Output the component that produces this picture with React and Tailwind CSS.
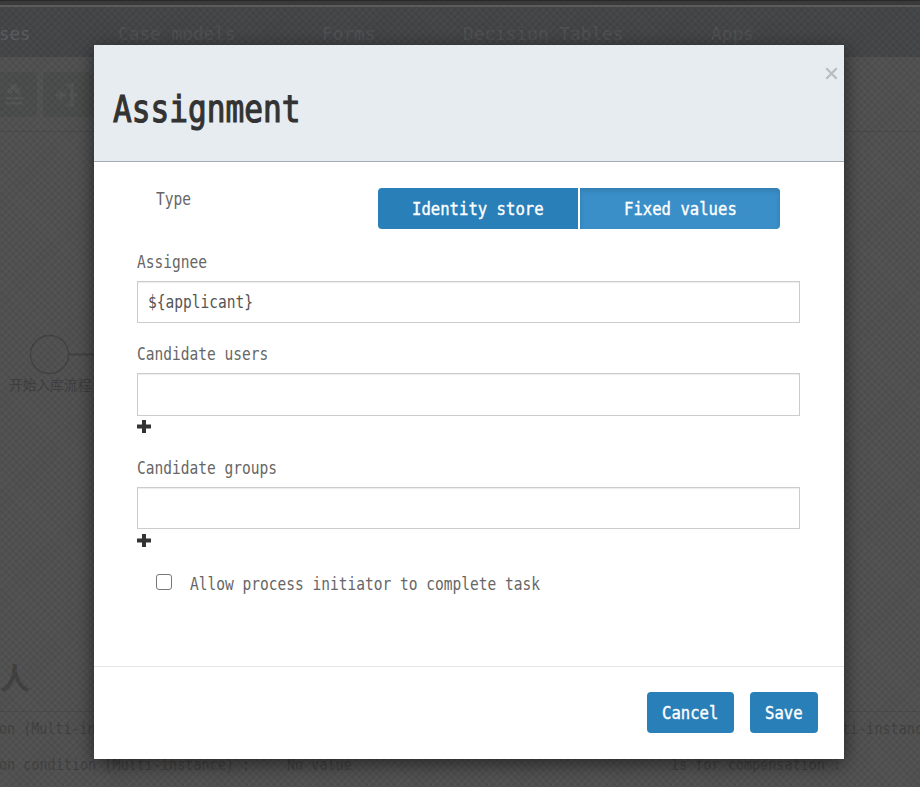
import React from "react";

function Mono({ text, advance, size, className = "" }) {
  const scale = advance / (size * 0.602);
  return (
    <span
      className={`inline-block h-6 leading-6 whitespace-nowrap ${className}`}
      style={{ width: text.length * advance }}
    >
      <span
        className="inline-block origin-left"
        style={{ fontSize: size, transform: `scaleX(${scale})` }}
      >
        {text}
      </span>
    </span>
  );
}

function Plus() {
  return (
    <svg className="block" width="14" height="13" viewBox="0 0 14 13" fill="#333">
      <path d="M5 0h4v4.500h5v4H9V13H5V8.500H0v-4h5z" />
    </svg>
  );
}

function Field({ label, value = "", tall = false }) {
  return (
    <div className="flex flex-col">
      <label className="flex h-6 text-[#666]">
        <Mono text={label} advance={8.75} size={18.5} />
      </label>
      <div
        className={`mt-[7px] flex items-center border border-[#ccc] bg-white pl-[10px] text-[#555] shadow-[inset_0_1px_1px_rgba(0,0,0,0.075)] ${tall ? "h-[43px]" : "h-[42px]"}`}
      >
        {value && <Mono text={value} advance={8.75} size={18.5} />}
      </div>
    </div>
  );
}

function Backdrop() {
  return (
    <div className="absolute inset-0 overflow-hidden bg-[#505050] text-[#404040]">
      <div className="h-[5px] border-t border-[#292929] bg-[#3a3a3a]" />
      <div className="h-[2px] bg-[#5b5b5c]" />
      <div className="h-[50px] bg-[#444547]" />
      <div className="flex h-[75px] gap-[6px] border-b border-[#484848] pt-[15px]">
        <div className="flex h-[45px] w-[37px] items-center rounded-r bg-[#494c4a]">
          <svg width="28" height="24" viewBox="0 0 28 24" fill="#525453">
            <circle cx="14" cy="4" r="3.500" />
            <circle cx="10" cy="8" r="3" />
            <circle cx="18" cy="8" r="3" />
            <path d="M5 14h18v2.500H5zM5 19h18v2.500H5z" />
          </svg>
        </div>
        <div className="flex h-[45px] w-[50px] items-center rounded bg-[#494c4a] pl-3">
          <svg width="24" height="24" viewBox="0 0 24 24" fill="none" stroke="#525453" strokeWidth="3">
            <path d="M1 12h10M6 8v9M12 2h5v20h-5M15 12h7" />
          </svg>
        </div>
      </div>
      <svg className="absolute inset-0" width="920" height="787">
        <g fill="none" stroke="#404142">
          <circle cx="49.500" cy="354.500" r="19" strokeWidth="1.300" />
          <path d="M69 354.500h26" strokeWidth="2" />
          <path d="M0 711.500h920" stroke="#494949" />
        </g>
      </svg>
      <div className="absolute top-[22px] left-[-1px]"><Mono text="ses" advance={10.5} size={18.5} className="text-[#5a5c5e]" /></div>
      <div className="absolute top-[22px] left-[118px]"><Mono text="Case models" advance={10.7} size={18.5} className="text-[#505152]" /></div>
      <div className="absolute top-[22px] left-[322px]"><Mono text="Forms" advance={10.7} size={18.5} className="text-[#505152]" /></div>
      <div className="absolute top-[22px] left-[463px]"><Mono text="Decision Tables" advance={10.7} size={18.5} className="text-[#505152]" /></div>
      <div className="absolute top-[22px] left-[711px]"><Mono text="Apps" advance={10.7} size={18.5} className="text-[#505152]" /></div>
      <div className="absolute top-[375px] left-[9px] text-[13.700px] leading-5 whitespace-nowrap text-[#3d3e3f]">开始入库流程</div>
      <div className="absolute top-[656px] left-0 text-[30px] leading-[46px] font-bold text-[#404040]">人</div>
      <div className="absolute top-[717px] left-[-1px]"><Mono text="on (Multi-instance)" advance={8.05} size={16.5} /></div>
      <div className="absolute top-[753px] left-[-1px]"><Mono text="on condition (Multi-instance) :" advance={8.1} size={16.5} /></div>
      <div className="absolute top-[753px] left-[287px]"><Mono text="No value" advance={8.1} size={16.5} /></div>
      <div className="absolute top-[753px] left-[671px]"><Mono text="Is for compensation :" advance={8.1} size={16.5} /></div>
      <div className="absolute top-[717px] left-[842px]"><Mono text="ti-instanc" advance={8.1} size={16.5} /></div>
      <div className="absolute inset-x-0 top-[7px] bottom-0 bg-[repeating-linear-gradient(45deg,rgba(0,0,0,0.05)_0_2px,transparent_2px_5px),repeating-linear-gradient(-45deg,rgba(255,255,255,0.025)_0_2px,transparent_2px_5px)]" />
    </div>
  );
}

export default function App() {
  return (
    <div className="relative h-[787px] w-[920px] overflow-hidden font-['DejaVu_Sans_Mono','Noto_Sans_CJK_SC',monospace]">
      <Backdrop />
      <div className="absolute top-[45px] left-[94px] flex h-[714px] w-[750px] flex-col bg-white shadow-[0_4px_18px_rgba(0,0,0,0.55)]">
        <header className="flex h-[117px] shrink-0 justify-between border-b border-[#a3abb5] bg-[#e7ecf0] pl-[19px]">
          <h2 className="pt-[52px] text-[#333]">
            <Mono text="Assignment" advance={18.75} size={37.5} className="[-webkit-text-stroke:1.200px_#333]" />
          </h2>
          <svg className="mt-[22px] mr-[6px]" width="13" height="13" viewBox="0 0 13 13" fill="none" stroke="#b9bdc0" strokeWidth="2.300">
            <path d="M1.300 1.300l10.400 10.400M11.700 1.300L1.300 11.700" />
          </svg>
        </header>
        <main className="flex h-[504px] shrink-0 flex-col pt-[26px] pr-[44px] pl-[43px]">
          <div className="flex h-[62px] justify-between pr-5 pl-[19px]">
            <span className="-mt-px text-[#666]"><Mono text="Type" advance={8.75} size={18.5} /></span>
            <div className="flex h-[41px] gap-[2px] text-white">
              <button className="flex w-[200px] items-center justify-center rounded-l bg-[#2980b9]">
                <Mono text="Identity store" advance={9.4} size={18.5} className="[-webkit-text-stroke:0.4px_white]" />
              </button>
              <button className="flex w-[200px] items-center justify-center rounded-r bg-[#3a8fc9] shadow-[inset_0_3px_5px_rgba(0,0,0,0.125)]">
                <Mono text="Fixed values" advance={9.4} size={18.5} className="[-webkit-text-stroke:0.4px_white]" />
              </button>
            </div>
          </div>
          <Field label="Assignee" value="${applicant}" />
          <div className="mt-[19px]"><Field label="Candidate users" tall /></div>
          <div className="mt-[4px]"><Plus /></div>
          <div className="mt-[23px]"><Field label="Candidate groups" /></div>
          <div className="mt-[5px]"><Plus /></div>
          <div className="mt-[25px] flex items-center gap-[18px] pl-[19px] text-[#666]">
            <span className="mb-[5px] h-4 w-4 rounded-[3px] border border-[#767676] bg-white" />
            <Mono text="Allow process initiator to complete task" advance={8.75} size={18.5} />
          </div>
        </main>
        <footer className="flex h-[93px] shrink-0 justify-end gap-4 border-t border-[#e5e5e5] pt-[25px] pr-[26px] text-white">
          <button className="flex h-[41px] w-[87px] items-center justify-center rounded bg-[#2980b9]">
            <Mono text="Cancel" advance={9.4} size={18.5} className="[-webkit-text-stroke:0.4px_white]" />
          </button>
          <button className="flex h-[41px] w-[68px] items-center justify-center rounded bg-[#2980b9]">
            <Mono text="Save" advance={9.4} size={18.5} className="[-webkit-text-stroke:0.4px_white]" />
          </button>
        </footer>
      </div>
    </div>
  );
}
